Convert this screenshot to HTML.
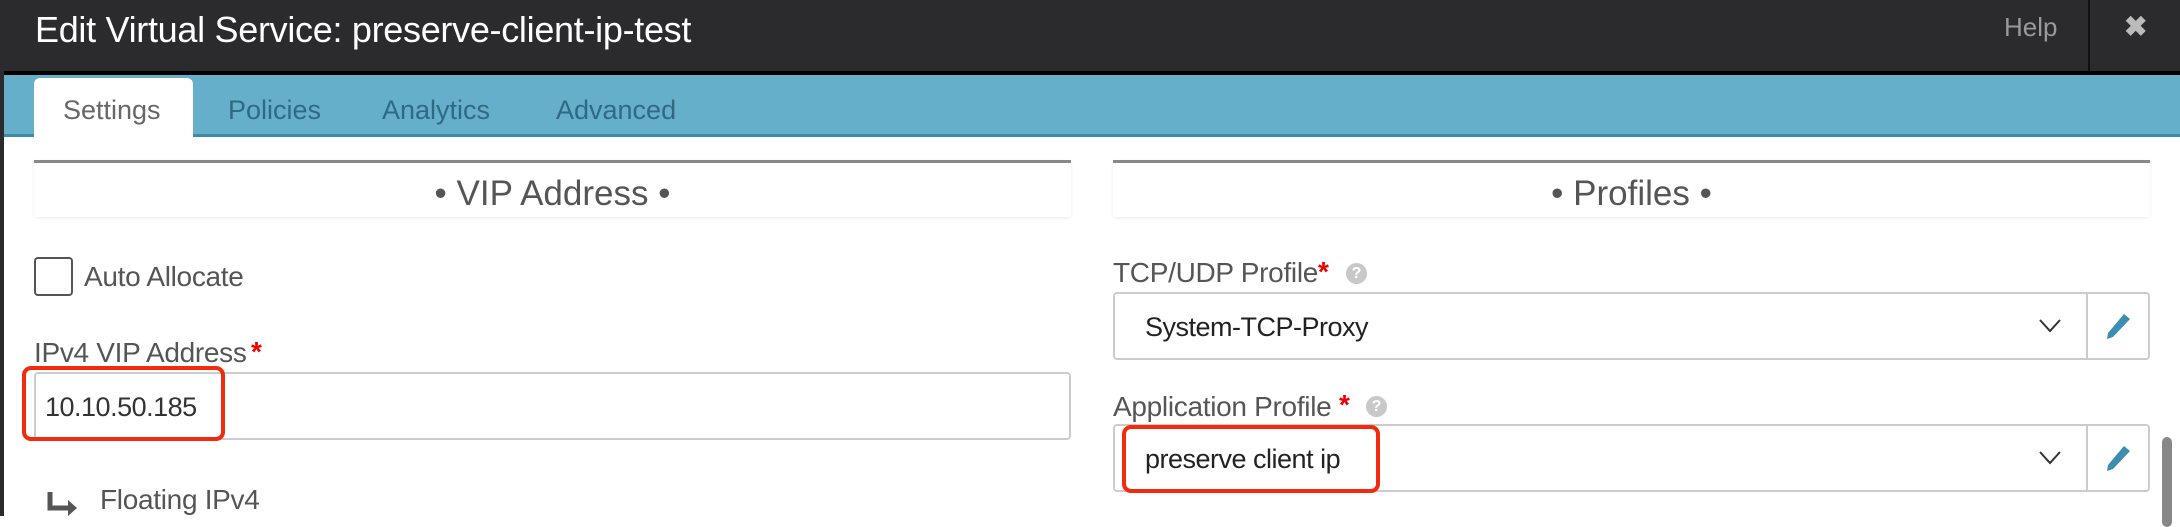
<!DOCTYPE html>
<html><head><meta charset="utf-8"><style>
*{margin:0;padding:0;box-sizing:border-box}
body{width:2180px;height:516px;overflow:hidden;background:#fff;font-family:"Liberation Sans",sans-serif;position:relative}
.a{position:absolute;white-space:nowrap}
.lbl{font-size:28px;color:#555;letter-spacing:-0.3px}
.star{color:#e00;font-size:28px;font-weight:bold}
.q{width:21px;height:21px;border-radius:50%;background:#c8c8c8;color:#fff;font-size:16px;font-weight:bold;text-align:center;line-height:21px}
.box{border:2px solid #ccc;border-radius:4px;background:#fff}
.red{border:4px solid #f22a0e;border-radius:9px}
</style></head><body>
<div class="a" style="left:0;top:0;width:2180px;height:71px;background:#2b2b2d"></div>
<div class="a" style="left:0;top:71px;width:2180px;height:4px;background:#000"></div>
<div class="a" style="left:0;top:0;width:4px;height:516px;background:#2b2b2d"></div>
<div class="a" style="left:35px;top:9px;font-size:36px;color:#fff;letter-spacing:-0.3px">Edit Virtual Service: preserve-client-ip-test</div>
<div class="a" style="left:2004px;top:12px;font-size:26px;color:#999">Help</div>
<div class="a" style="left:2088px;top:0;width:2px;height:71px;background:#111"></div>
<div class="a" style="left:2124px;top:10px;font-size:28px;color:#bbb;font-weight:bold">✖</div>
<div class="a" style="left:4px;top:75px;width:2176px;height:61px;background:#66afcb"></div>
<div class="a" style="left:4px;top:134px;width:2176px;height:3px;background:#3f8aa8"></div>
<div class="a" style="left:34px;top:78px;width:159px;height:59px;background:#fff;border-radius:6px 6px 0 0"></div>
<div class="a" style="left:63px;top:95px;font-size:27px;color:#666">Settings</div>
<div class="a" style="left:228px;top:95px;font-size:27px;color:#2f6a82">Policies</div>
<div class="a" style="left:382px;top:95px;font-size:27px;color:#2f6a82">Analytics</div>
<div class="a" style="left:556px;top:95px;font-size:27px;color:#2f6a82">Advanced</div>

<div class="a" style="left:34px;top:160px;width:1037px;height:57px;border-top:3px solid #888;box-shadow:0 1px 3px rgba(0,0,0,.08)"></div>
<div class="a" style="left:34px;top:174px;width:1037px;text-align:center;font-size:35px;color:#555">• VIP Address •</div>
<div class="a" style="left:1113px;top:160px;width:1037px;height:57px;border-top:3px solid #888;box-shadow:0 1px 3px rgba(0,0,0,.08)"></div>
<div class="a" style="left:1113px;top:174px;width:1037px;text-align:center;font-size:35px;color:#555">• Profiles •</div>

<div class="a" style="left:34px;top:257px;width:39px;height:39px;border:2px solid #555;border-radius:4px"></div>
<div class="a lbl" style="left:84px;top:261px">Auto Allocate</div>
<div class="a lbl" style="left:34px;top:337px">IPv4 VIP Address</div>
<div class="a star" style="left:251px;top:336px">*</div>
<div class="a box" style="left:34px;top:372px;width:1037px;height:68px"></div>
<div class="a" style="left:45px;top:392px;font-size:27px;color:#333;letter-spacing:-0.5px">10.10.50.185</div>
<div class="a red" style="left:22px;top:366px;width:203px;height:75px"></div>
<svg class="a" style="left:46px;top:492px" width="34" height="24"><path d="M4 0V16H24" fill="none" stroke="#555" stroke-width="5"/><path d="M22 8L31 16L22 24Z" fill="#555"/></svg>
<div class="a lbl" style="left:100px;top:484px">Floating IPv4</div>

<div class="a lbl" style="left:1113px;top:257px">TCP/UDP Profile</div>
<div class="a star" style="left:1318px;top:256px">*</div>
<div class="a q" style="left:1346px;top:263px">?</div>
<div class="a box" style="left:1113px;top:292px;width:1037px;height:68px"></div>
<div class="a" style="left:2086px;top:293px;width:2px;height:66px;background:#ccc"></div>
<div class="a" style="left:1145px;top:312px;font-size:27px;color:#222;letter-spacing:-0.5px">System-TCP-Proxy</div>
<svg class="a" style="left:2039px;top:318px" width="22" height="16"><path d="M1 2L11 13L21 2" fill="none" stroke="#333" stroke-width="2"/></svg>
<svg class="a" style="left:2104px;top:312px" width="28" height="28"><path d="M20 2L26 7L9 25L3 27L4 21Z" fill="#3d8db0"/></svg>

<div class="a lbl" style="left:1113px;top:391px">Application Profile</div>
<div class="a star" style="left:1339px;top:389px">*</div>
<div class="a q" style="left:1366px;top:396px">?</div>
<div class="a box" style="left:1113px;top:424px;width:1037px;height:68px"></div>
<div class="a" style="left:2086px;top:425px;width:2px;height:66px;background:#ccc"></div>
<div class="a" style="left:1145px;top:444px;font-size:27px;color:#222;letter-spacing:-0.5px">preserve client ip</div>
<svg class="a" style="left:2039px;top:450px" width="22" height="16"><path d="M1 2L11 13L21 2" fill="none" stroke="#333" stroke-width="2"/></svg>
<svg class="a" style="left:2104px;top:444px" width="28" height="28"><path d="M20 2L26 7L9 25L3 27L4 21Z" fill="#3d8db0"/></svg>
<div class="a red" style="left:1122px;top:425px;width:258px;height:68px"></div>
<div class="a" style="left:2162px;top:437px;width:10px;height:90px;background:#888;border-radius:5px"></div>
</body></html>
